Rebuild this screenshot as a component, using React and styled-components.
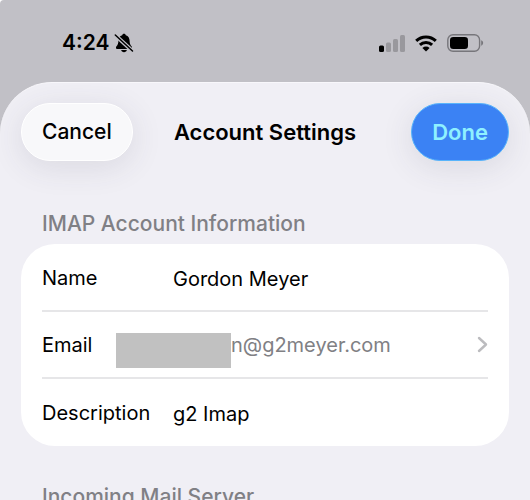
import React from "react";
import styled, { createGlobalStyle } from "styled-components";

const GlobalStyle = createGlobalStyle`
  *, *::before, *::after { box-sizing: border-box; }
  html { background: #fff; }
  body {
    margin: 0;
    font-family: Inter, "Liberation Sans", sans-serif;
    font-size: 20px;
    line-height: 24px;
    color: #000;
    -webkit-font-smoothing: antialiased;
  }
  button, input { font: inherit; color: inherit; }
`;

const Screen = styled.div`
  display: flex;
  flex-direction: column;
  height: 100vh;
  overflow: hidden;
  background: #c1c0c6;
  border-top-left-radius: 4px;
`;

const StatusBar = styled.div`
  display: flex;
  flex: none;
  align-items: center;
  justify-content: space-between;
  height: 82px;
  padding: 4px 46px 0 62px;
`;

const StatusGroup = styled.div`
  display: flex;
  align-items: center;
  gap: ${(p) => p.$gap}px;
`;

const Clock = styled.time`
  font-size: 21px;
  font-weight: 600;
`;

const Sheet = styled.main`
  flex: 1;
  min-height: 0;
  overflow: hidden;
  padding: 20px 21px 0;
  background: #f0eff5;
  border-top: 1px solid #f8f7fb;
  border-radius: 52px 52px 0 0;
`;

const Header = styled.header`
  display: grid;
  grid-template-columns: 1fr auto 1fr;
  align-items: center;
`;

const Title = styled.h1`
  margin: 0;
  font-size: 22px;
  font-weight: 600;
`;

const PillButton = styled.button`
  height: 58px;
  padding: 0 20px;
  border: 1px solid ${(p) => (p.$primary ? "#58b4fb" : "#fff")};
  border-radius: 29px;
  background: ${(p) => (p.$primary ? "#3b82f4" : "#f8f8fa")};
  color: ${(p) => (p.$primary ? "#8ff0ff" : "#000")};
  font-size: ${(p) => (p.$primary ? 22 : 21)}px;
  font-weight: ${(p) => (p.$primary ? 600 : 500)};
  justify-self: ${(p) => (p.$primary ? "end" : "start")};
  box-shadow: 0 6px 32px rgba(60, 55, 80, 0.12);
  cursor: pointer;
`;

const SectionTitle = styled.h2`
  margin: ${(p) => p.$top}px 21px 8px;
  font-size: 21px;
  font-weight: 500;
  color: #808085;
`;

const Card = styled.div`
  padding: 1px 21px 0;
  border-radius: 34px;
  background: #fff;
`;

const Row = styled.div`
  display: flex;
  align-items: center;
  height: 67px;

  &:not(:last-child) { border-bottom: 2px solid #e6e6e8; }
`;

const Label = styled.label`
  flex: none;
  width: 131px;
`;

const TextInput = styled.input`
  flex: 1;
  min-width: 0;
  padding: 2px 0 0;
  border: 0;
  outline: 0;
  background: transparent;
`;

const RowButton = styled.button`
  display: flex;
  flex: 1;
  align-items: center;
  padding: 0;
  border: 0;
  background: transparent;
  text-align: left;
  cursor: pointer;
`;

const RowButtonLabel = styled.span`
  width: 74px;
`;

const Redaction = styled.span`
  width: 115px;
  height: 35px;
  margin-top: 12px;
  background: #c1c1c1;
`;

const Address = styled.span`
  flex: 1;
  color: #808084;
`;

function MutedBell() {
  return (
    <svg width="20" height="20" viewBox="0 0 20 20" role="img" aria-label="Silent mode">
      <path d="M10 .8c1 0 1.700.6 1.800 1.500 2.600.8 3.700 2.900 3.800 5.500.1 3 .6 4.100 1.900 5.400.8.8.9 2.700-.7 2.700H3.200c-1.600 0-1.500-1.900-.7-2.700 1.300-1.300 1.800-2.400 1.900-5.400.1-2.600 1.200-4.700 3.800-5.500C8.300 1.400 9 .8 10 .8Z" />
      <path d="M7.200 17h5.600c-.2 1.300-1.300 2.200-2.800 2.200S7.400 18.300 7.200 17Z" />
      <path d="M1 2 18.500 18" stroke="#c1c0c6" strokeWidth="3.800" />
      <path d="M1.300 2 18.500 18" stroke="#000" strokeWidth="1.500" strokeLinecap="round" />
    </svg>
  );
}

function SignalBars() {
  return (
    <svg width="26" height="17" viewBox="0 0 26 17" role="img" aria-label="Signal: one bar">
      <rect x="0" y="10.500" width="5" height="6.500" rx="1.500" />
      <g fill="#99989d">
        <rect x="7" y="7.500" width="5" height="9.500" rx="1.500" />
        <rect x="14" y="4" width="5" height="13" rx="1.500" />
        <rect x="21" y="0" width="5" height="17" rx="1.500" />
      </g>
    </svg>
  );
}

function Wifi() {
  return (
    <svg width="22" height="17" viewBox="0 0 22 17" role="img" aria-label="Wi-Fi">
      <g fill="none" stroke="#000" strokeWidth="3">
        <path d="M1.200 5.900a14 14 0 0 1 19.600 0" />
        <path d="M4.900 9.900a8.700 8.700 0 0 1 12.200 0" />
      </g>
      <path d="M11 16.600 7.400 13a5.200 5.200 0 0 1 7.200 0Z" />
    </svg>
  );
}

function Battery() {
  return (
    <svg width="37" height="18" viewBox="0 0 37 18" role="img" aria-label="Battery: 60%">
      <rect x=".8" y=".8" width="31.800" height="16.400" rx="5.200" fill="none" stroke="#77767b" strokeWidth="1.400" />
      <rect x="3" y="3" width="18" height="12" rx="3.300" />
      <path d="M34.200 6.300c1.200.5 1.900 1.500 1.900 2.700s-.7 2.200-1.900 2.700Z" fill="#77767b" />
    </svg>
  );
}

function Chevron() {
  return (
    <svg width="11" height="17" viewBox="0 0 11 17" aria-hidden="true">
      <path d="m2 2 7 6.500L2 15" fill="none" stroke="#bcbcbf" strokeWidth="2.400" strokeLinecap="round" strokeLinejoin="round" />
    </svg>
  );
}

export default function App() {
  return (
    <>
      <GlobalStyle />
      <Screen>
        <StatusBar>
          <StatusGroup $gap={5}>
            <Clock>4:24</Clock>
            <MutedBell />
          </StatusGroup>
          <StatusGroup $gap={10}>
            <SignalBars />
            <Wifi />
            <Battery />
          </StatusGroup>
        </StatusBar>
        <Sheet>
          <Header>
            <PillButton type="button">Cancel</PillButton>
            <Title>Account Settings</Title>
            <PillButton type="button" $primary>Done</PillButton>
          </Header>
          <SectionTitle $top={51}>IMAP Account Information</SectionTitle>
          <Card>
            <Row>
              <Label htmlFor="name">Name</Label>
              <TextInput id="name" defaultValue="Gordon Meyer" />
            </Row>
            <Row>
              <RowButton type="button">
                <RowButtonLabel>Email</RowButtonLabel>
                <Redaction />
                <Address>n@g2meyer.com</Address>
                <Chevron />
              </RowButton>
            </Row>
            <Row>
              <Label htmlFor="description">Description</Label>
              <TextInput id="description" defaultValue="g2 Imap" />
            </Row>
          </Card>
          <SectionTitle $top={39}>Incoming Mail Server</SectionTitle>
        </Sheet>
      </Screen>
    </>
  );
}
